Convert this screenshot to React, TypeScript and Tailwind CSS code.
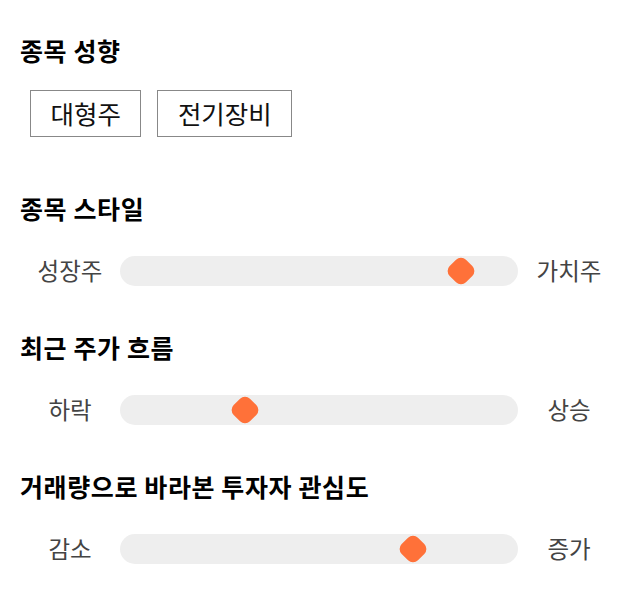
import React from 'react';

interface SliderRow {
  title: string;
  left: string;
  right: string;
  value: number;
}

const rows: SliderRow[] = [
  { title: '종목 스타일', left: '성장주', right: '가치주', value: 0.857 },
  { title: '최근 주가 흐름', left: '하락', right: '상승', value: 0.314 },
  { title: '거래량으로 바라본 투자자 관심도', left: '감소', right: '증가', value: 0.736 },
];

const tags = ['대형주', '전기장비'];

const font = { fontFamily: '"Noto Sans CJK KR", "Noto Sans", sans-serif' };

const Heading: React.FC<{ children: React.ReactNode }> = ({ children }) => (
  <h2 className="text-[25px] leading-[30px] font-bold tracking-[0.6px] text-black">{children}</h2>
);

const RangeRow: React.FC<{ row: SliderRow }> = ({ row }) => (
  <div className="flex items-center h-10">
    <span className="w-[100px] text-center text-[23.5px] text-[#444]">{row.left}</span>
    <div className="relative w-[398px] h-[30px] rounded-full bg-[#eeeeee]">
      <div
        className="absolute top-1/2 w-[23px] h-[23px] rounded-[7px] bg-[#ff7139] -translate-x-1/2 -translate-y-1/2 rotate-45"
        style={{ left: `${row.value * 100}%` }}
      />
    </div>
    <span className="w-[102px] text-center text-[23.5px] text-[#444]">{row.right}</span>
  </div>
);

const App: React.FC = () => {
  return (
    <div className="w-[640px] h-[606px] bg-white pt-[35px] px-5" style={font}>
      <Heading>종목 성향</Heading>
      <div className="flex gap-4 mt-[25px] ml-[10px]">
        {tags.map((t) => (
          <span
            key={t}
            className="h-[47px] px-[19.5px] border border-[#888] flex items-center text-[25.5px] text-[#111]"
          >
            {t}
          </span>
        ))}
      </div>
      {rows.map((row, i) => (
        <div key={row.title} className={i === 0 ? 'mt-[56px]' : 'mt-[41px]'}>
          <Heading>{row.title}</Heading>
          <div className="mt-[28px]">
            <RangeRow row={row} />
          </div>
        </div>
      ))}
    </div>
  );
};

export default App;
